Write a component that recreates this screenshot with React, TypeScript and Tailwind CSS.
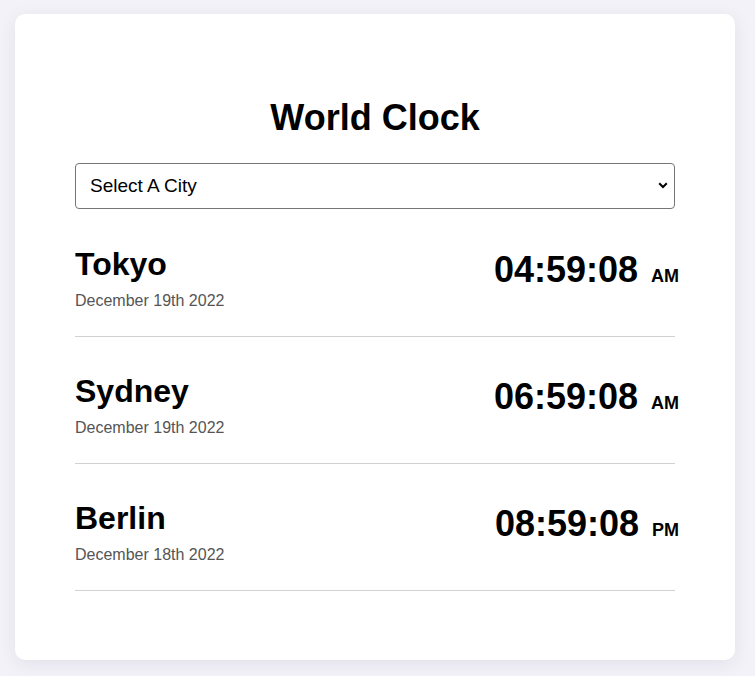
import React from "react";

const cities = [
  { name: "Tokyo", date: "December 19th 2022", time: "04:59:08", ampm: "AM" },
  { name: "Sydney", date: "December 19th 2022", time: "06:59:08", ampm: "AM" },
  { name: "Berlin", date: "December 18th 2022", time: "08:59:08", ampm: "PM" },
];

export default function App() {
  return (
    <div
      className="min-h-[676px] w-full bg-[#f3f2f8] pt-[14px] pb-[16px] px-[15px]"
      style={{ fontFamily: '"Liberation Sans", Arial, Helvetica, sans-serif' }}
    >
      <div className="w-[720px] h-[646px] bg-white rounded-[10px] shadow-[0_4px_18px_rgba(40,30,80,0.08)] px-[60px] pt-[82px]">
        <h1 className="text-center text-[36px] leading-[43px] font-bold text-black">World Clock</h1>
        <div className="relative mt-[24px]">
          <select
            className="appearance-none w-full h-[46px] border border-[#767676] rounded-[4px] bg-white pl-[14px] pr-[30px] text-[19px] text-black outline-none"
            defaultValue=""
            style={{ fontFamily: '"Liberation Sans", Arial, Helvetica, sans-serif' }}
          >
            <option value="">Select A City</option>
            <option value="tokyo">Tokyo</option>
            <option value="sydney">Sydney</option>
            <option value="berlin">Berlin</option>
          </select>
          <svg
            className="pointer-events-none absolute right-[7px] top-[19px]"
            width="10"
            height="7"
            viewBox="0 0 10 7"
          >
            <path d="M1.2 1.3 L5 5 L8.8 1.3" fill="none" stroke="#000" strokeWidth="2" />
          </svg>
        </div>
        <div className="mt-[1px]">
          {cities.map((c) => (
            <div
              key={c.name}
              className="flex justify-between items-start border-b border-[#d2d2d2] pt-[35px] pb-[23px]"
            >
              <div>
                <div className="text-[32px] leading-[38px] font-bold text-black">{c.name}</div>
                <div className="mt-[6px] text-[16px] leading-[24px] text-[#555]">{c.date}</div>
              </div>
              <div className="flex items-baseline pt-[3px] -mr-[4px] whitespace-nowrap font-bold text-black">
                <span className="text-[36px] leading-[43px]">{c.time}</span>
                <span className="ml-[13px] text-[18px]">{c.ampm}</span>
              </div>
            </div>
          ))}
        </div>
      </div>
    </div>
  );
}
